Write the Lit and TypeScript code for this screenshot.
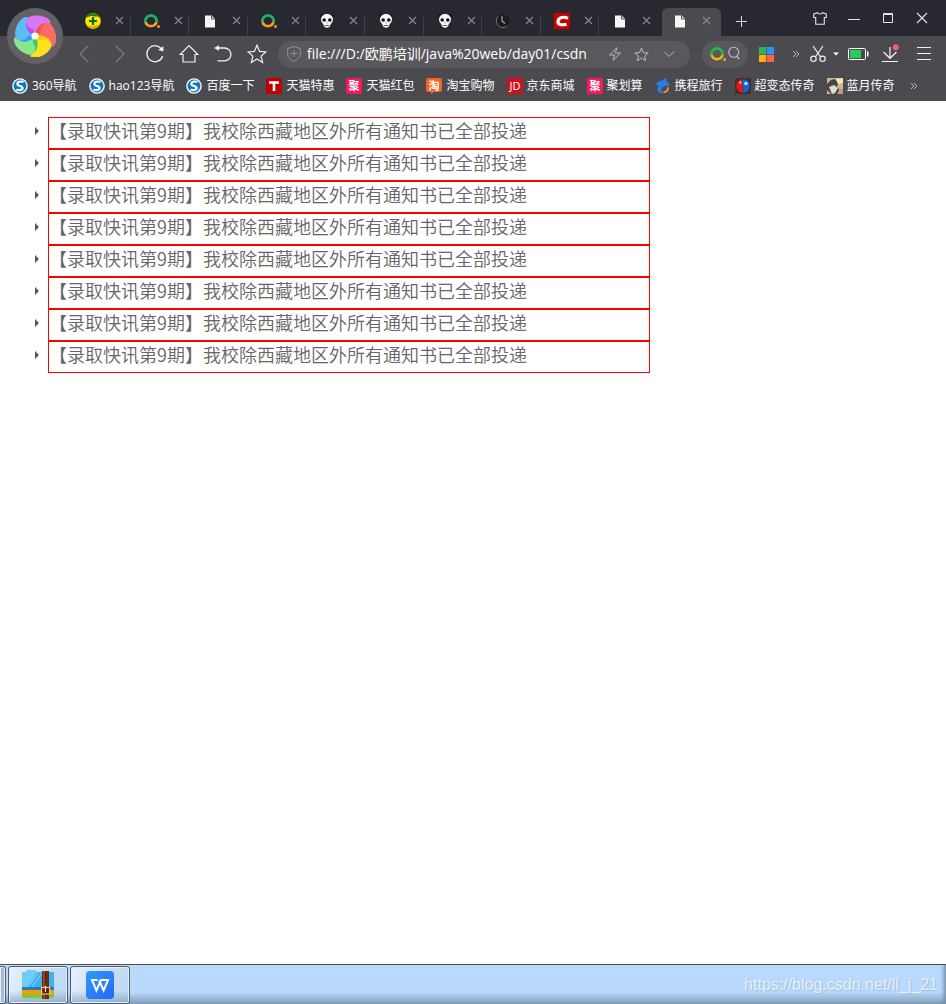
import { LitElement, html, css, svg, TemplateResult } from "lit";
import { customElement } from "lit/decorators.js";
import { classMap } from "lit/directives/class-map.js";

const icon = (w: number, h: number, body: unknown): TemplateResult =>
  html`<svg width=${w} height=${h} viewBox="0 0 ${w} ${h}" aria-hidden="true">${body}</svg>`;

const cross = icon(9, 9, svg`<path d="M1 1L8 8M8 1L1 8" stroke="#8a8a8e" stroke-width="1.1"/>`);

const chevrons = icon(8, 8, svg`<path d="M1 1L4 4L1 7M4 1L7 4L4 7" fill="none" stroke="#b4b4b6" stroke-width="1"/>`);

const favicons: Record<string, TemplateResult> = {
  shield: icon(16, 16, svg`
    <circle cx="8" cy="8" r="7.8" fill="#ffe800"/>
    <path d="M.8 5A7.8 7.8 0 0 1 15.2 5C13.5 2.6 11 4 8.5 3.2C6 2.4 2.5 4 .8 5Z" fill="#2f7d12"/>
    <path d="M.8 11A7.8 7.8 0 0 0 15.4 10C13 12.6 11 12 9 13C6 14 2.5 12.5 .8 11Z" fill="#d8b000"/>
    <path d="M8 4V12M4 8H12" stroke="#0b6b1c" stroke-width="2.2"/>`),
  ring: icon(16, 16, svg`
    <path d="M1.5 9A5.6 5.6 0 1 1 12.5 9" fill="none" stroke="#18b268" stroke-width="2.8"/>
    <path d="M1.6 9A5.6 5.6 0 0 0 12.4 9" fill="none" stroke="#f79a20" stroke-width="2.8"/>
    <circle cx="14.5" cy="13.5" r="1.5" fill="#f79a20"/>`),
  page: icon(16, 16, svg`
    <path d="M3 2.5H9.5L13 6V14.5H3Z" fill="#f6f6f6"/>
    <path d="M9.5 2.5V6H13" fill="#d6d6d6" stroke="#55555a" stroke-width="1"/>`),
  panda: icon(16, 16, svg`
    <circle cx="3.2" cy="3.2" r="2" fill="#111"/><circle cx="12.8" cy="3.2" r="2" fill="#111"/>
    <path d="M8 1C12 1 14 3.6 14 6.6C14 9.5 12 10.4 11.6 11.6C11.2 14 9.8 14.8 8 14.8S4.8 14 4.4 11.6C4 10.4 2 9.5 2 6.6C2 3.6 4 1 8 1Z" fill="#f7f7f7"/>
    <ellipse cx="5.2" cy="7" rx="1.8" ry="1.7" fill="#111"/><ellipse cx="10.8" cy="7" rx="1.8" ry="1.7" fill="#111"/>
    <path d="M7.2 9.4H8.8L8 10.4ZM5.8 12H10.2V12.8H5.8Z" fill="#333"/>`),
  clock: icon(16, 16, svg`
    <circle cx="8" cy="8" r="6.6" fill="#1a1c20"/>
    <path d="M3 3.5A6.5 6.5 0 0 0 3.5 12.8A6.5 6.5 0 0 0 12.5 12.8" fill="none" stroke="#73767b" stroke-width="1"/>
    <path d="M7 3V8L10 10.5" fill="none" stroke="#a0a2a5" stroke-width="1.2"/>`),
  csdn: icon(16, 16, svg`
    <rect width="16" height="16" fill="#c90000"/>
    <path d="M14 5.3C10 3.6 5.2 4 4 8C3.1 11.8 8 12.4 12.6 11.3" fill="none" stroke="#fff" stroke-width="3"/>`),
  sogou: icon(16, 16, svg`
    <circle cx="8" cy="8" r="7.8" fill="#f2f8fc"/><circle cx="8" cy="8" r="6.4" fill="#0a79c0"/>
    <path d="M11.5 4C8.5 2.8 5 4 5.4 6.2C5.8 8.3 10.6 7.6 10.6 10C10.6 12.2 7 12.6 4.4 11.4" fill="none" stroke="#fff" stroke-width="2.2"/>`),
  tmall: icon(16, 16, svg`
    <rect width="16" height="16" rx="1.5" fill="#c00000"/>
    <path d="M3 4.5H13M8 4.5V13" stroke="#fff" stroke-width="2.6"/>`),
  ju: icon(16, 16, svg`
    <rect width="16" height="16" rx="1.5" fill="#f5195b"/>
    <text x="8" y="12" text-anchor="middle" class="mark">聚</text>`),
  tao: icon(16, 16, svg`
    <path d="M2 0H14A2 2 0 0 1 16 2V12A2 2 0 0 1 14 14H8L5 16V14H2A2 2 0 0 1 0 12V2A2 2 0 0 1 2 0Z" fill="#f56423"/>
    <text x="8" y="12" text-anchor="middle" class="mark">淘</text>`),
  jd: icon(16, 16, svg`
    <rect width="16" height="16" fill="#c9141e"/>
    <text x="8" y="12" text-anchor="middle" class="latin-mark">JD</text>`),
  dolphin: icon(16, 16, svg`
    <path d="M1 6C3 2.6 6 3 7.5 2.5C8.5 .5 10 .2 12 .6C11.2 1.4 11 2.4 11.4 3C13.6 4 14.6 6 14 8.6C12 7 9.4 7.6 7.6 9.4C5.6 11.4 6 13.8 8 15.4C3.6 15.6 1 12.4 3 9C3.4 7.6 2.4 6.6 1 6Z" fill="#2a7de1"/>
    <path d="M13 9.4C13.2 12.4 11.4 14.4 8.4 14" fill="none" stroke="#f0a030" stroke-width="1.8"/>`),
  orb: icon(16, 16, svg`
    <rect width="16" height="16" fill="#4d3020"/>
    <circle cx="8" cy="8" r="7.4" fill="#0d1950"/>
    <path d="M8 1A7 7 0 0 0 8 15C10 11 6 6 8 1Z" fill="#df1c12"/>
    <path d="M8 1A7 7 0 0 1 8 15C10 11 6 6 8 1Z" fill="#1464d8"/>
    <circle cx="5.3" cy="4.6" r="1.4" fill="#ff9d8e"/><circle cx="11" cy="5.5" r="1.8" fill="#b0e2ff"/>`),
  knight: icon(16, 16, svg`
    <rect width="16" height="16" fill="#cdb887"/>
    <path d="M0 6L4 2L8 1L11 5L10 9L13 12L10 16H4L0 12Z" fill="#4a4541"/>
    <path d="M2 9L7 7L11 10L8 15L5 16Z" fill="#dcdcd8"/>
    <path d="M9 1L16 0V5L11 6Z" fill="#f2e7be"/><path d="M12 11H16V16H11Z" fill="#cf8f82"/>`),
};

const tabs: { kind: string; title: string }[] = [
  { kind: "shield", title: "360" }, { kind: "ring", title: "360" },
  { kind: "page", title: "file" }, { kind: "ring", title: "360" },
  { kind: "panda", title: "panda" }, { kind: "panda", title: "panda" },
  { kind: "panda", title: "panda" }, { kind: "clock", title: "clock" },
  { kind: "csdn", title: "CSDN" }, { kind: "page", title: "file" },
  { kind: "page", title: "file" },
];

const bookmarks: [string, string][] = [
  ["sogou", "360导航"], ["sogou", "hao123导航"], ["sogou", "百度一下"],
  ["tmall", "天猫特惠"], ["ju", "天猫红包"], ["tao", "淘宝购物"],
  ["jd", "京东商城"], ["ju", "聚划算"], ["dolphin", "携程旅行"],
  ["orb", "超变态传奇"], ["knight", "蓝月传奇"],
];

const base = css`
  * { box-sizing: border-box; }
  svg { display: block; flex: none; }
  button { appearance: none; border: 0; padding: 0; margin: 0; background: none; font: inherit; color: inherit; display: flex; align-items: center; justify-content: center; flex: none; }
`;

@customElement("tab-strip")
export class TabStrip extends LitElement {
  static styles = [base, css`
    :host { display: flex; height: 36px; background: #282830; padding: 0 7px 0 72px; align-items: flex-end; }
    .tabs { display: flex; flex: 0 1 649px; min-width: 0; align-items: flex-end; }
    .tab { display: flex; align-items: center; flex: 1 1 0; height: 28px; padding: 0 0 3px 13px; gap: 14px; background: linear-gradient(#3f3f46, #3f3f46) right bottom / 1px 20px no-repeat; }
    .tab.before { background: none; }
    .tab.active { flex: 0 0 59px; margin-left: 4px; padding-left: 10px; background: #4a4a4f; border-radius: 6px 6px 0 0; }
    .icon { flex: none; }
    .close { width: 9px; height: 16px; }
    .add { width: 40px; height: 30px; }
    .controls { display: flex; height: 36px; margin-left: auto; }
    .control { width: 34px; height: 36px; }
  `];

  render() {
    return html`
      <div class="tabs">
        ${tabs.map((t, i) => html`
          <div class=${classMap({ tab: true, active: i === tabs.length - 1, before: i === tabs.length - 2 })}>
            <span class="icon">${favicons[t.kind]}</span>
            <button class="close" aria-label="关闭 ${t.title}">${cross}</button>
          </div>`)}
      </div>
      <button class="add" aria-label="新标签页">${icon(11, 11, svg`<path d="M5.5 0V11M0 5.5H11" stroke="#dcdcde"/>`)}</button>
      <div class="controls">
        <button class="control" aria-label="皮肤">${icon(14, 13, svg`<path d="M4.5 .7C5 2.4 9 2.4 9.5 .7L13.3 2V5.5H11.3V12.3H2.7V5.5H.7V2Z" fill="none" stroke="#e4e4e6" stroke-width="1.1"/>`)}</button>
        <button class="control" aria-label="最小化">${icon(12, 11, svg`<path d="M0 6.5H12" stroke="#e4e4e6"/>`)}</button>
        <button class="control" aria-label="最大化">${icon(10, 10, svg`<path d="M.5 .5H9.5V9.5H.5ZM0 1.5H10" fill="none" stroke="#e4e4e6"/>`)}</button>
        <button class="control" aria-label="关闭">${icon(12, 12, svg`<path d="M1 1L11 11M11 1L1 11" stroke="#e4e4e6" stroke-width="1.1"/>`)}</button>
      </div>`;
  }
}

@customElement("tool-bar")
export class ToolBar extends LitElement {
  static styles = [base, css`
    :host { display: flex; align-items: center; height: 36px; background: #4a4a4f; padding: 0 5px 0 66px; }
    .nav { width: 34px; height: 34px; }
    .step { width: 36px; height: 34px; }
    .address { display: flex; align-items: center; flex: 1 1 0; min-width: 0; height: 27px; margin: 0 12px 0 4px; padding: 0 8px; border-radius: 14px; background: #58585d; }
    .url { flex: 1 1 0; min-width: 0; width: 100%; border: 0; outline: 0; padding: 0 0 2px; margin: 0 14px 0 5px; height: 27px; background: none; color: #fff; font: 14px/25px "Open Sans", "Noto Sans CJK SC", sans-serif; }
    .inside { width: 27px; height: 27px; }
    .search { width: 46px; height: 27px; border-radius: 14px; background: #58585d; gap: 2px; }
    .grid { width: 36px; height: 34px; }
    .more { width: 24px; height: 34px; }
    .cut { width: 20px; height: 34px; }
    .caret { width: 16px; height: 34px; }
    .battery { width: 29px; height: 34px; }
  `];

  render() {
    const line = "#f2f2f3";
    return html`
      <button class="step" aria-label="后退">${icon(20, 20, svg`<path d="M14 2L6 10L14 18" fill="none" stroke="#7d7d82" stroke-width="1.2"/>`)}</button>
      <button class="step" aria-label="前进">${icon(20, 20, svg`<path d="M6 2L14 10L6 18" fill="none" stroke="#7d7d82" stroke-width="1.2"/>`)}</button>
      <button class="nav" aria-label="刷新">${icon(20, 20, svg`<path d="M17 6A8 8 0 1 0 17.6 12" fill="none" stroke=${line} stroke-width="1.3"/><path d="M18.4 2V7.4L13.2 6Z" fill=${line}/>`)}</button>
      <button class="nav" aria-label="主页">${icon(20, 20, svg`<path d="M1.2 10.5L10 1.7L18.8 10.5H16V18H4V10.5Z" fill="none" stroke=${line} stroke-width="1.2"/>`)}</button>
      <button class="nav" aria-label="恢复">${icon(20, 20, svg`<path d="M4 4H11.5A6.4 6.4 0 0 1 11.5 16.8H4.5" fill="none" stroke=${line} stroke-width="1.3"/><path d="M1 4L6 1.3V6.7Z" fill=${line}/>`)}</button>
      <button class="nav" aria-label="收藏">${icon(20, 20, svg`<path d="M10 1.2L12.6 7.4L19 7.9L14.1 12.1L15.6 18.4L10 15L4.4 18.4L5.9 12.1L1 7.9L7.4 7.4Z" fill="none" stroke=${line} stroke-width="1.2"/>`)}</button>
      <div class="address">
        ${icon(16, 18, svg`<path d="M8 1.5L14.3 3.5V9C14.3 12.5 11 15 8 16.3C5 15 1.7 12.5 1.7 9V3.5ZM8 5V12M4.5 8.5H11.5" fill="none" stroke="#939397"/>`)}
        <input class="url" aria-label="地址" value="file:///D:/欧鹏培训/java%20web/day01/csdn">
        <button class="inside" aria-label="极速模式">${icon(14, 14, svg`<path d="M8.8 .8L1.5 8H6.6L5.2 13.2L12.5 6H7.4Z" fill="none" stroke="#bcbcbf"/>`)}</button>
        <button class="inside" aria-label="收藏此页">${icon(15, 15, svg`<path d="M7.5 1L9.4 5.6L14.2 6L10.5 9L11.7 13.7L7.5 11.2L3.3 13.7L4.5 9L.8 6L5.6 5.6Z" fill="none" stroke="#bcbcbf"/>`)}</button>
        <button class="inside" aria-label="展开">${icon(12, 8, svg`<path d="M1 1.5L6 6.5L11 1.5" fill="none" stroke="#bcbcbf"/>`)}</button>
      </div>
      <button class="search" aria-label="搜索">
        ${icon(16, 16, svg`<path d="M1.5 9A5.6 5.6 0 1 1 12.5 9" fill="none" stroke="#25b84c" stroke-width="2.6"/><path d="M1.6 9A5.6 5.6 0 0 0 12.4 9" fill="none" stroke="#fbb116" stroke-width="2.6"/><circle cx="14.6" cy="13.6" r="1.4" fill="#fbb116"/>`)}
        ${icon(12, 16, svg`<circle cx="5.7" cy="6.3" r="5" fill="none" stroke="#c4c4c6" stroke-width="1.1"/><path d="M8.5 10.2L11.3 13" stroke="#c4c4c6" stroke-width="1.2"/>`)}
      </button>
      <button class="grid" aria-label="应用">${icon(15, 15, svg`<path d="M0 0H7.5V7.5H0Z" fill="#2cb55c"/><path d="M7.500 0H15V7.5H7.500Z" fill="#2b93f5"/><path d="M0 7.500H7.5V15H0Z" fill="#fdb014"/><path d="M7.500 7.500H15V15H7.500Z" fill="#fa6444"/><path d="M7.5 0V15M0 7.5H15" stroke="#4a4a4f" stroke-width=".6"/>`)}</button>
      <button class="more" aria-label="更多">${chevrons}</button>
      <button class="cut" aria-label="截图">${icon(16, 18, svg`<path d="M3 1L10.7 12M13 1L5.3 12" stroke=${line} stroke-width="1.2"/><circle cx="3.5" cy="13.8" r="2.7" fill="none" stroke=${line} stroke-width="1.2"/><circle cx="12.5" cy="13.8" r="2.7" fill="none" stroke=${line} stroke-width="1.2"/>`)}</button>
      <button class="caret" aria-label="截图选项">${icon(6, 4, svg`<path d="M0 .5H6L3 3.5Z" fill="#fff"/>`)}</button>
      <button class="battery" aria-label="电池">${icon(21, 12, svg`<rect x=".5" y=".5" width="17" height="11" rx="1" fill="none" stroke="#fff"/><rect x="2" y="2" width="11" height="8" fill="#26cd5c"/><path d="M19 3.5H20.5V8.5H19Z" fill="#fff"/>`)}</button>
      <button class="nav" aria-label="下载">${icon(18, 20, svg`<path d="M9 3V14M2.5 8L9 14.3L15.5 8M1 17.5H17" fill="none" stroke=${line} stroke-width="1.2"/><circle cx="14.8" cy="3.2" r="3" fill="#ef6261"/>`)}</button>
      <button class="nav" aria-label="菜单">${icon(14, 14, svg`<path d="M0 .5H14M0 6.5H14M0 12.5H14" stroke=${line}/>`)}</button>`;
  }
}

@customElement("bookmark-bar")
export class BookmarkBar extends LitElement {
  static styles = [base, css`
    :host { display: flex; align-items: center; gap: 12px; height: 29px; background: #4a4a4f; padding: 0 12px 2px; color: #fff; font: 12px/16px "Open Sans", "Noto Sans CJK SC", sans-serif; }
    .link { display: flex; flex: none; align-items: center; gap: 4px; color: inherit; text-decoration: none; white-space: nowrap; }
    .link svg { overflow: visible; }
    .mark { font: 700 11px "Noto Sans CJK SC", sans-serif; fill: #fff; }
    .latin-mark { font: 11px "Open Sans", sans-serif; fill: #fff; }
    .more { width: 14px; height: 20px; }
  `];

  render() {
    return html`
      ${bookmarks.map(([kind, label]) => html`<a class="link" href="#">${favicons[kind]}<span>${label}</span></a>`)}
      <button class="more" aria-label="更多书签">${chevrons}</button>`;
  }
}

@customElement("task-bar")
export class TaskBar extends LitElement {
  static styles = [base, css`
    :host { display: flex; align-items: stretch; gap: 2px; height: 40px; padding-top: 1px; border-top: 1px solid #454e5a; background: linear-gradient(#d6e9fc 0, #b9d9fd 2px, #b8d9fc 70%, #a5c4e4 80%, #809bb6 100%); box-shadow: inset -4px 0 4px -2px #7189a3; }
    .task { width: 60px; border: 1px solid #4e5e70; border-radius: 3px; box-shadow: inset 0 0 0 1px #e4effb; background: linear-gradient(transparent 65%, rgba(110, 138, 168, .55)), linear-gradient(115deg, #e9f2fd, #c5dcf6 60%, #bdd8f5); }
    .edge { width: 6px; border-left: 0; border-radius: 0 3px 3px 0; background: #a9bdd1; }
    .watermark { margin-left: auto; padding-right: 8px; align-self: center; color: #e6f0fb; font: 16px/20px "Liberation Sans", sans-serif; text-shadow: 1px 1px 1px #9fb9d6; }
  `];

  render() {
    return html`
      <button class="task edge" aria-label="开始"></button>
      <button class="task" aria-label="压缩文件">${icon(32, 30, svg`
        <path d="M0 20H32V27A1 1 0 0 1 31 28H1A1 1 0 0 1 0 27Z" fill="#83c72e"/>
        <path d="M0 18H32V24H0Z" fill="#fa9b0f"/>
        <path d="M0 4C0 2 1 2 4 2L6 0H12L15 2H31A1 1 0 0 1 32 3V20H0Z" fill="#1f7fbd"/>
        <path d="M0 4C0 2 1 2 4 2L6 0H12L15 2H31A1 1 0 0 1 32 3V17H0Z" fill="#43b0ee"/>
        <path d="M0 4C0 2 1 2 4 2L6 0H12L15 2L5 17H0Z" fill="#6fcdf8"/>
        <path d="M16 3L6 17M20 3L10 17" stroke="#8ad8fb" stroke-width="1"/>
        <path d="M20 1H27V29H20Z" fill="#6b2d10"/><path d="M21 1H23V29H21Z" fill="#91471f"/>
        <path d="M23.5 4V5M23.5 8V9M23.5 12V13" stroke="#2f1207" stroke-width="1.5"/>
        <rect x="19.6" y="17.5" width="8" height="6.5" fill="#542008" stroke="#f0c588" stroke-width="1.2"/>
        <path d="M23.5 16V22" stroke="#ffe4ad" stroke-width="1.2"/>`)}</button>
      <button class="task" aria-label="WPS">${icon(28, 28, svg`
        <defs><linearGradient id="blue" x1="0" y1="0" x2="1" y2="1"><stop stop-color="#2d9bfd"/><stop offset="1" stop-color="#2b66f3"/></linearGradient></defs>
        <rect width="28" height="28" rx="4" fill="url(#blue)"/>
        <path d="M11.5 9H6L10.4 19.4L14.9 9H22L17.6 19.4L13.2 9.4" fill="none" stroke="#fff" stroke-width="2"/>`)}</button>
      <span class="watermark">https://blog.csdn.net/ll_j_21</span>`;
  }
}

@customElement("app-root")
export class AppRoot extends LitElement {
  static styles = [base, css`
    :host { display: flex; flex-direction: column; min-height: 100vh; background: #fff; }
    .chrome { position: relative; }
    .logo { position: absolute; left: 7px; top: 8px; width: 56px; height: 56px; border-radius: 50%; background: #626266; }
    .page { flex: 1; padding: 16px 16px 16px 48px; }
    .news { list-style: none; margin: 0; padding: 0; max-width: 602px; }
    .item { position: relative; height: 32px; border: 1px solid #f00; color: #666; font: 350 18px/24px "Noto Sans CJK SC", sans-serif; white-space: nowrap; }
    .item::before { content: ""; position: absolute; left: -14px; top: 9px; border: solid transparent; border-width: 4px 0 4px 4px; border-left-color: #555; }
  `];

  render() {
    const petals: [string, string][] = [
      ["#d877f3", "#b650ea"], ["#fb6b66", "#f4524f"], ["#ffe21a", "#f9cb08"],
      ["#8ae58c", "#43cb66"], ["#5dbcf6", "#2f9ff1"],
    ];
    return html`
      <header class="chrome">
        <tab-strip></tab-strip>
        <tool-bar></tool-bar>
        <bookmark-bar></bookmark-bar>
        <button class="logo" aria-label="浏览器菜单">${icon(42, 42, svg`
          ${petals.map((c, i) => svg`<path transform="rotate(${i * 72} 21 21)" d="M21 21C13 18 9 9 13.500 3C20 -1 31 0 35.500 5L37 8C33 8 29 9 26 11C23 13 21.500 17 21 21Z" fill=${c[0]}/>`)}
          <path d="M21 21C13 18 9 9 13.500 3C17 .8 20 .5 23 .8C19 6 18 12 21 21Z" fill=${petals[0][0]}/>
          ${petals.map((c, i) => svg`<path transform="rotate(${i * 72} 21 21)" d="M21 21C14.500 18.500 11 12.500 11.800 7C13 11 15 13.500 19.500 14.500Z" fill=${c[1]}/>`)}
          <circle cx="21" cy="21" r="3.6" fill="#fff"/>`)}</button>
      </header>
      <main class="page">
        <ul class="news">
          ${Array.from({ length: 8 }, () => html`<li class="item">【录取快讯第9期】我校除西藏地区外所有通知书已全部投递</li>`)}
        </ul>
      </main>
      <task-bar></task-bar>`;
  }
}
